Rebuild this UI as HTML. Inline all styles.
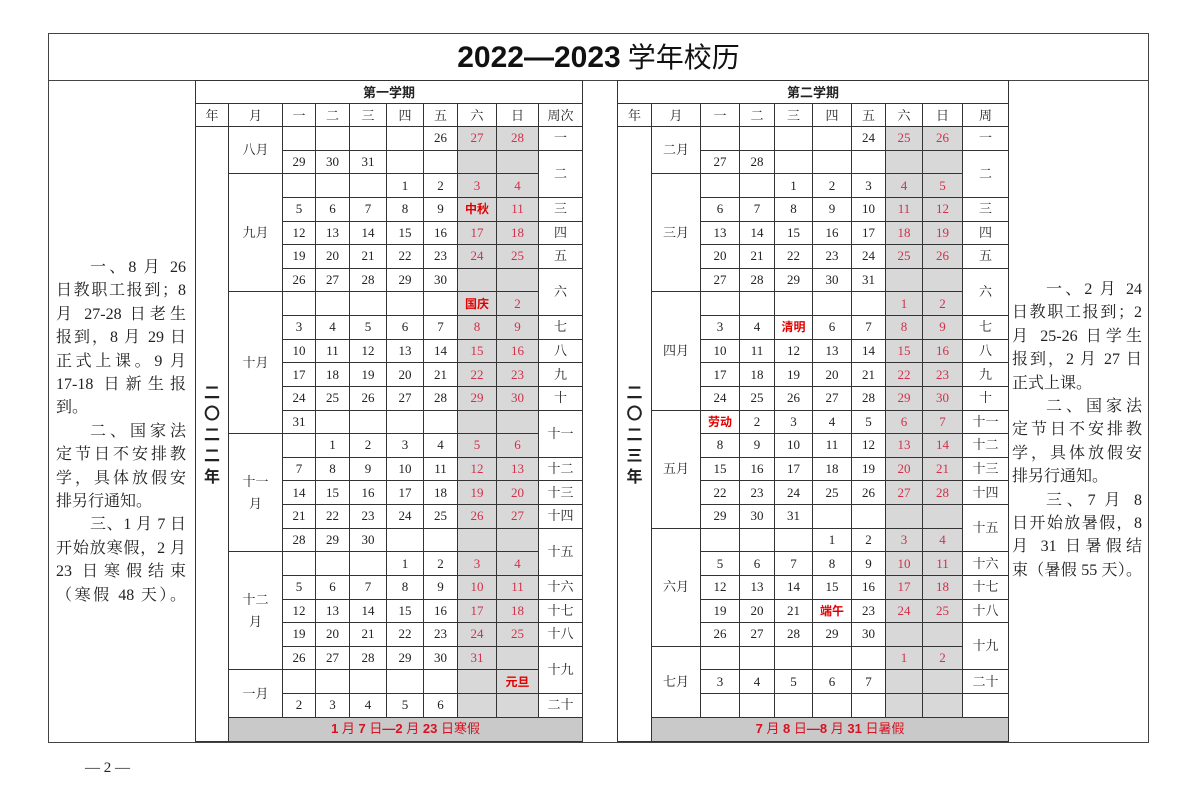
<!DOCTYPE html>
<html><head><meta charset="utf-8">
<style>
*{margin:0;padding:0;box-sizing:border-box}
body{width:1183px;height:787px;background:#fff;position:relative;overflow:hidden;font-family:"Liberation Serif","Noto Serif CJK SC",serif;color:#222}
.frame{position:absolute;left:48px;top:33px;width:1101px;height:710px;border:1px solid #444}
.title{position:absolute;left:48px;top:33px;width:1101px;height:48px;border-bottom:1px solid #444;text-align:center;line-height:50px;font-size:28px}
.title b{font-family:"Liberation Sans",sans-serif;font-weight:bold;font-size:30px;color:#111}
.title span{font-family:"Liberation Sans","Noto Sans CJK SC",sans-serif;color:#111}
table{position:absolute;top:80px;border-collapse:collapse;table-layout:fixed}
td{border:1px solid #333;text-align:center;vertical-align:middle;font-size:13px;height:23.64px;padding:0;line-height:14px;white-space:nowrap;overflow:hidden}
tr.h td{height:23px}
.g{background:#d8d8d8}
.r{color:#d0304a}
.fr{color:#e00000;font-weight:bold;font-family:"Liberation Sans","Noto Sans CJK SC",sans-serif;font-size:12px}
.v{background:#c9c9c9;color:#d81020;font-family:"Liberation Sans","Noto Sans CJK SC",sans-serif;font-size:13px;height:24px}
.v b{font-weight:bold}
.yr{font-family:"Noto Sans CJK SC",sans-serif;font-weight:bold;font-size:16px;line-height:21px;white-space:normal}
.hd td{font-size:13px;font-family:"Noto Serif CJK SC",serif}
.sem{font-family:"Noto Sans CJK SC",sans-serif;font-size:13px;font-weight:bold}
.mo{font-size:13px;line-height:22px;white-space:normal}
.txt{position:absolute;font-size:16px;line-height:23.4px;font-family:"Liberation Serif","Noto Serif CJK SC",serif;color:#222}
.txt div{text-align:justify;text-align-last:justify;white-space:nowrap}
.txt div.l{text-align-last:left}
.foot{position:absolute;left:85px;top:760px;font-size:15px}
</style></head><body>
<div class="frame"></div>
<div class="title"><b>2022—2023</b> <span>学年校历</span></div>

<div class="txt" style="left:56px;top:256px;width:130px">
<div style="padding-left:34px">一、8 月 26</div>
<div>日教职工报到；8</div>
<div>月 27-28 日老生</div>
<div>报到，8 月 29 日</div>
<div>正式上课。9 月</div>
<div>17-18 日新生报</div>
<div class="l">到。</div>
<div style="padding-left:34px">二、国家法</div>
<div>定节日不安排教</div>
<div>学，具体放假安</div>
<div class="l">排另行通知。</div>
<div style="padding-left:34px">三、1 月 7 日</div>
<div>开始放寒假，2 月</div>
<div>23 日寒假结束</div>
<div>（寒假 48 天）。</div>
</div>

<div class="txt" style="left:1012px;top:278px;width:130px">
<div style="padding-left:34px">一、2 月 24</div>
<div>日教职工报到；2</div>
<div>月 25-26 日学生</div>
<div>报到，2 月 27 日</div>
<div class="l">正式上课。</div>
<div style="padding-left:34px">二、国家法</div>
<div>定节日不安排教</div>
<div>学，具体放假安</div>
<div class="l">排另行通知。</div>
<div style="padding-left:34px">三、7 月 8</div>
<div>日开始放暑假，8</div>
<div>月 31 日暑假结</div>
<div>束（暑假 55 天）。</div>
</div>

<table style="left:195px;width:387px">
<colgroup><col style="width:33px"><col style="width:54px"><col style="width:33px"><col style="width:34px"><col style="width:37px"><col style="width:37px"><col style="width:34px"><col style="width:39px"><col style="width:42px"><col style="width:44px"></colgroup>
<tr class="h"><td colspan="10" class="sem">第一学期</td></tr>
<tr class="h hd"><td>年</td><td>月</td><td>一</td><td>二</td><td>三</td><td>四</td><td>五</td><td>六</td><td>日</td><td>周次</td></tr>
<tr><td rowspan="26" class="yr">二<br>〇<br>二<br>二<br>年</td><td rowspan="2" class="mo">八月</td><td></td><td></td><td></td><td></td><td>26</td><td class="g r">27</td><td class="g r">28</td><td>一</td></tr>
<tr><td>29</td><td>30</td><td>31</td><td></td><td></td><td class="g"></td><td class="g"></td><td rowspan="2">二</td></tr>
<tr><td rowspan="5" class="mo">九月</td><td></td><td></td><td></td><td>1</td><td>2</td><td class="g r">3</td><td class="g r">4</td></tr>
<tr><td>5</td><td>6</td><td>7</td><td>8</td><td>9</td><td class="g fr">中秋</td><td class="g r">11</td><td>三</td></tr>
<tr><td>12</td><td>13</td><td>14</td><td>15</td><td>16</td><td class="g r">17</td><td class="g r">18</td><td>四</td></tr>
<tr><td>19</td><td>20</td><td>21</td><td>22</td><td>23</td><td class="g r">24</td><td class="g r">25</td><td>五</td></tr>
<tr><td>26</td><td>27</td><td>28</td><td>29</td><td>30</td><td class="g"></td><td class="g"></td><td rowspan="2">六</td></tr>
<tr><td rowspan="6" class="mo">十月</td><td></td><td></td><td></td><td></td><td></td><td class="g fr">国庆</td><td class="g r">2</td></tr>
<tr><td>3</td><td>4</td><td>5</td><td>6</td><td>7</td><td class="g r">8</td><td class="g r">9</td><td>七</td></tr>
<tr><td>10</td><td>11</td><td>12</td><td>13</td><td>14</td><td class="g r">15</td><td class="g r">16</td><td>八</td></tr>
<tr><td>17</td><td>18</td><td>19</td><td>20</td><td>21</td><td class="g r">22</td><td class="g r">23</td><td>九</td></tr>
<tr><td>24</td><td>25</td><td>26</td><td>27</td><td>28</td><td class="g r">29</td><td class="g r">30</td><td>十</td></tr>
<tr><td>31</td><td></td><td></td><td></td><td></td><td class="g"></td><td class="g"></td><td rowspan="2">十一</td></tr>
<tr><td rowspan="5" class="mo">十一<br>月</td><td></td><td>1</td><td>2</td><td>3</td><td>4</td><td class="g r">5</td><td class="g r">6</td></tr>
<tr><td>7</td><td>8</td><td>9</td><td>10</td><td>11</td><td class="g r">12</td><td class="g r">13</td><td>十二</td></tr>
<tr><td>14</td><td>15</td><td>16</td><td>17</td><td>18</td><td class="g r">19</td><td class="g r">20</td><td>十三</td></tr>
<tr><td>21</td><td>22</td><td>23</td><td>24</td><td>25</td><td class="g r">26</td><td class="g r">27</td><td>十四</td></tr>
<tr><td>28</td><td>29</td><td>30</td><td></td><td></td><td class="g"></td><td class="g"></td><td rowspan="2">十五</td></tr>
<tr><td rowspan="5" class="mo">十二<br>月</td><td></td><td></td><td></td><td>1</td><td>2</td><td class="g r">3</td><td class="g r">4</td></tr>
<tr><td>5</td><td>6</td><td>7</td><td>8</td><td>9</td><td class="g r">10</td><td class="g r">11</td><td>十六</td></tr>
<tr><td>12</td><td>13</td><td>14</td><td>15</td><td>16</td><td class="g r">17</td><td class="g r">18</td><td>十七</td></tr>
<tr><td>19</td><td>20</td><td>21</td><td>22</td><td>23</td><td class="g r">24</td><td class="g r">25</td><td>十八</td></tr>
<tr><td>26</td><td>27</td><td>28</td><td>29</td><td>30</td><td class="g r">31</td><td class="g"></td><td rowspan="2">十九</td></tr>
<tr><td rowspan="2" class="mo">一月</td><td></td><td></td><td></td><td></td><td></td><td class="g"></td><td class="g fr">元旦</td></tr>
<tr><td>2</td><td>3</td><td>4</td><td>5</td><td>6</td><td class="g"></td><td class="g"></td><td>二十</td></tr>
<tr><td colspan="9" class="v"><b>1</b> 月 <b>7</b> 日<b>—2</b> 月 <b>23</b> 日寒假</td></tr>
</table>

<table style="left:617px;width:391px">
<colgroup><col style="width:34px"><col style="width:49px"><col style="width:39px"><col style="width:35px"><col style="width:38px"><col style="width:39px"><col style="width:34px"><col style="width:37px"><col style="width:40px"><col style="width:46px"></colgroup>
<tr class="h"><td colspan="10" class="sem">第二学期</td></tr>
<tr class="h hd"><td>年</td><td>月</td><td>一</td><td>二</td><td>三</td><td>四</td><td>五</td><td>六</td><td>日</td><td>周</td></tr>
<tr><td rowspan="26" class="yr">二<br>〇<br>二<br>三<br>年</td><td rowspan="2" class="mo">二月</td><td></td><td></td><td></td><td></td><td>24</td><td class="g r">25</td><td class="g r">26</td><td>一</td></tr>
<tr><td>27</td><td>28</td><td></td><td></td><td></td><td class="g"></td><td class="g"></td><td rowspan="2">二</td></tr>
<tr><td rowspan="5" class="mo">三月</td><td></td><td></td><td>1</td><td>2</td><td>3</td><td class="g r">4</td><td class="g r">5</td></tr>
<tr><td>6</td><td>7</td><td>8</td><td>9</td><td>10</td><td class="g r">11</td><td class="g r">12</td><td>三</td></tr>
<tr><td>13</td><td>14</td><td>15</td><td>16</td><td>17</td><td class="g r">18</td><td class="g r">19</td><td>四</td></tr>
<tr><td>20</td><td>21</td><td>22</td><td>23</td><td>24</td><td class="g r">25</td><td class="g r">26</td><td>五</td></tr>
<tr><td>27</td><td>28</td><td>29</td><td>30</td><td>31</td><td class="g"></td><td class="g"></td><td rowspan="2">六</td></tr>
<tr><td rowspan="5" class="mo">四月</td><td></td><td></td><td></td><td></td><td></td><td class="g r">1</td><td class="g r">2</td></tr>
<tr><td>3</td><td>4</td><td class="fr">清明</td><td>6</td><td>7</td><td class="g r">8</td><td class="g r">9</td><td>七</td></tr>
<tr><td>10</td><td>11</td><td>12</td><td>13</td><td>14</td><td class="g r">15</td><td class="g r">16</td><td>八</td></tr>
<tr><td>17</td><td>18</td><td>19</td><td>20</td><td>21</td><td class="g r">22</td><td class="g r">23</td><td>九</td></tr>
<tr><td>24</td><td>25</td><td>26</td><td>27</td><td>28</td><td class="g r">29</td><td class="g r">30</td><td>十</td></tr>
<tr><td rowspan="5" class="mo">五月</td><td class="fr">劳动</td><td>2</td><td>3</td><td>4</td><td>5</td><td class="g r">6</td><td class="g r">7</td><td>十一</td></tr>
<tr><td>8</td><td>9</td><td>10</td><td>11</td><td>12</td><td class="g r">13</td><td class="g r">14</td><td>十二</td></tr>
<tr><td>15</td><td>16</td><td>17</td><td>18</td><td>19</td><td class="g r">20</td><td class="g r">21</td><td>十三</td></tr>
<tr><td>22</td><td>23</td><td>24</td><td>25</td><td>26</td><td class="g r">27</td><td class="g r">28</td><td>十四</td></tr>
<tr><td>29</td><td>30</td><td>31</td><td></td><td></td><td class="g"></td><td class="g"></td><td rowspan="2">十五</td></tr>
<tr><td rowspan="5" class="mo">六月</td><td></td><td></td><td></td><td>1</td><td>2</td><td class="g r">3</td><td class="g r">4</td></tr>
<tr><td>5</td><td>6</td><td>7</td><td>8</td><td>9</td><td class="g r">10</td><td class="g r">11</td><td>十六</td></tr>
<tr><td>12</td><td>13</td><td>14</td><td>15</td><td>16</td><td class="g r">17</td><td class="g r">18</td><td>十七</td></tr>
<tr><td>19</td><td>20</td><td>21</td><td class="fr">端午</td><td>23</td><td class="g r">24</td><td class="g r">25</td><td>十八</td></tr>
<tr><td>26</td><td>27</td><td>28</td><td>29</td><td>30</td><td class="g"></td><td class="g"></td><td rowspan="2">十九</td></tr>
<tr><td rowspan="3" class="mo">七月</td><td></td><td></td><td></td><td></td><td></td><td class="g r">1</td><td class="g r">2</td></tr>
<tr><td>3</td><td>4</td><td>5</td><td>6</td><td>7</td><td class="g"></td><td class="g"></td><td>二十</td></tr>
<tr><td></td><td></td><td></td><td></td><td></td><td class="g"></td><td class="g"></td><td></td></tr>
<tr><td colspan="9" class="v"><b>7</b> 月 <b>8</b> 日<b>—8</b> 月 <b>31</b> 日暑假</td></tr>
</table>

<div class="foot">— 2 —</div>
</body></html>
